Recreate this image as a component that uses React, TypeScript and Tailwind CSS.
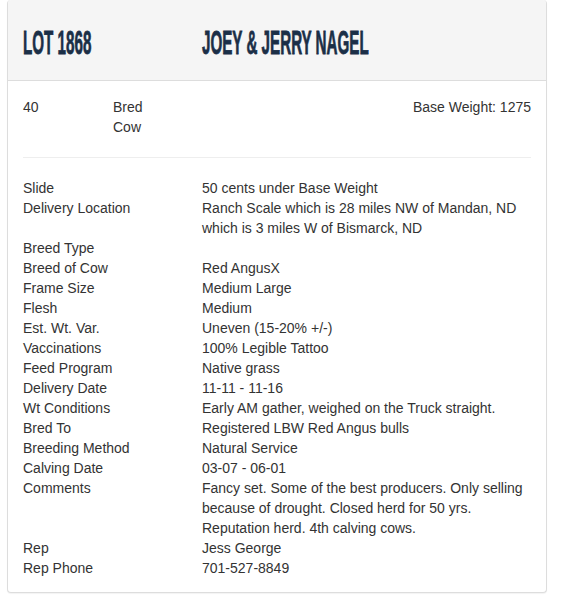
const details: [string, string][] = [
  ["Slide", "50 cents under Base Weight"],
  ["Delivery Location", "Ranch Scale which is 28 miles NW of Mandan, ND which is 3 miles W of Bismarck, ND"],
  ["Breed Type", ""],
  ["Breed of Cow", "Red AngusX"],
  ["Frame Size", "Medium Large"],
  ["Flesh", "Medium"],
  ["Est. Wt. Var.", "Uneven (15-20% +/-)"],
  ["Vaccinations", "100% Legible Tattoo"],
  ["Feed Program", "Native grass"],
  ["Delivery Date", "11-11 - 11-16"],
  ["Wt Conditions", "Early AM gather, weighed on the Truck straight."],
  ["Bred To", "Registered LBW Red Angus bulls"],
  ["Breeding Method", "Natural Service"],
  ["Calving Date", "03-07 - 06-01"],
  ["Comments", "Fancy set. Some of the best producers. Only selling because of drought. Closed herd for 50 yrs. Reputation herd. 4th calving cows."],
  ["Rep", "Jess George"],
  ["Rep Phone", "701-527-8849"],
];

// condensed display face isn't installed, so squeeze Liberation Sans Bold
function Title({ children }: { children: string }) {
  return (
    <span className="inline-block origin-left scale-x-[0.46] whitespace-nowrap text-[33px] font-bold leading-none text-[#1b2f47] [-webkit-text-stroke:0.8px_#1b2f47] [font-family:'Liberation_Sans',Arial,sans-serif]">
      {children}
    </span>
  );
}

export default function App() {
  return (
    <div className="min-h-[610px] bg-white pb-4 pl-[7px] text-[14px] leading-5 text-[#333] [font-family:'Liberation_Sans',Arial,sans-serif]">
      <div className="w-[540px] overflow-hidden rounded border border-t-0 border-[#ddd] bg-white shadow-[0_1px_1px_rgba(0,0,0,0.05)]">
        <div className="flex h-[81px] items-center border-b border-[#ddd] bg-[#f5f5f5] px-[15px] pt-1">
          <div className="w-[179px] shrink-0">
            <Title>LOT 1868</Title>
          </div>
          <Title>JOEY &amp; JERRY NAGEL</Title>
        </div>
        <div className="px-[15px] pt-4 pb-[14px]">
          <div className="flex">
            <div className="w-[90px]">40</div>
            <div className="w-[40px]">Bred Cow</div>
            <div className="flex-1 text-right">Base Weight: 1275</div>
          </div>
          <hr className="my-5 border-t border-[#eee]" />
          <div className="flex flex-col">
            {details.map(([label, value]) => (
              <div key={label} className="flex min-h-5">
                <div className="w-[179px] shrink-0">{label}</div>
                <div className="flex-1">{value}</div>
              </div>
            ))}
          </div>
        </div>
      </div>
    </div>
  );
}
